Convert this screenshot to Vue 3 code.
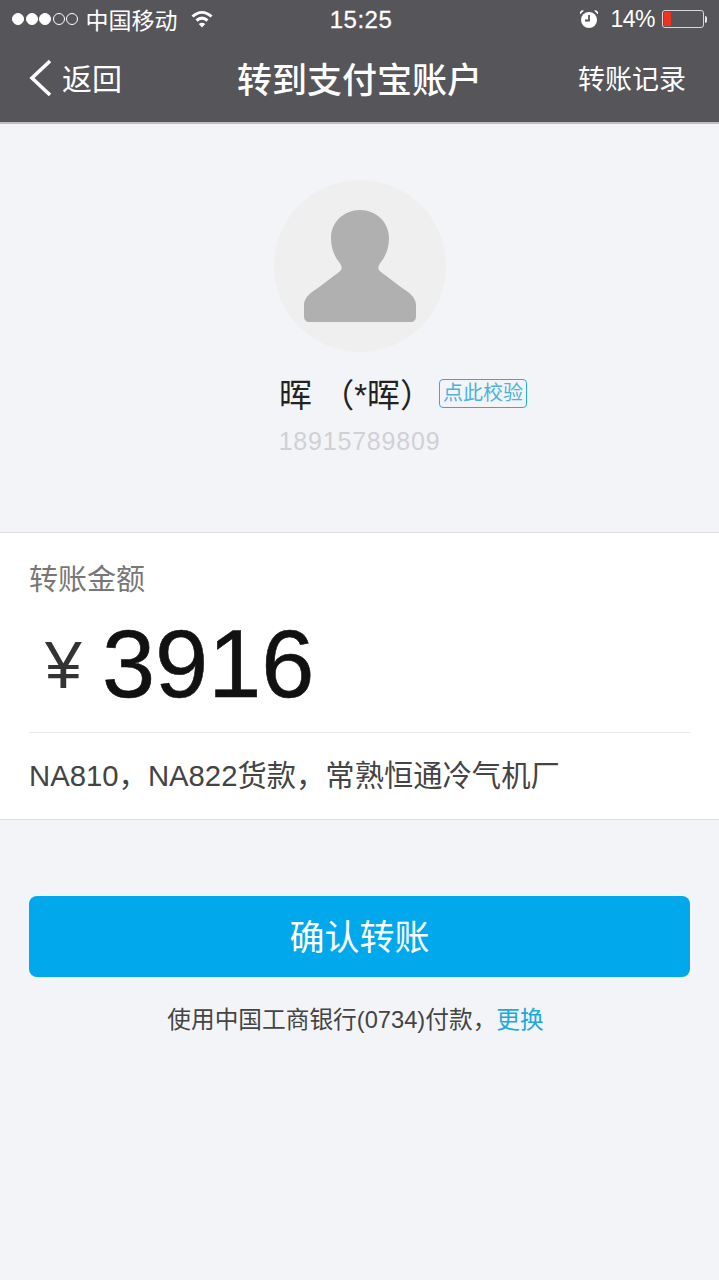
<script setup>
const signal = [1, 1, 1, 0, 0]
</script>
<template>
  <div class="page">
    <div class="top">
      <div class="status">
        <div class="status-left">
          <i v-for="(on, i) in signal" :key="i" class="dot" :class="{ on: on }"></i>
          <span class="carrier">中国移动</span>
          <svg class="wifi" width="22" height="18" viewBox="0 0 22 18">
            <path d="M1.5 6.5C7.5 1 14.5 1 20.5 6.5" fill="none" stroke="#fff" stroke-width="3"/>
            <path d="M5.5 10.5C9 7.5 13 7.5 16.5 10.5" fill="none" stroke="#fff" stroke-width="3"/>
            <path d="M7.8 14C10 12.4 12 12.4 14.2 14L11 17.5z" fill="#fff"/>
          </svg>
        </div>
        <div class="time">15:25</div>
        <div class="status-right">
          <svg class="alarm" width="20" height="20" viewBox="0 0 20 20">
            <circle cx="10" cy="11" r="8" fill="#fff"/>
            <path d="M1 5.5 5 1.5 2.8 1.3 1 3z M19 5.5 15 1.5 17.2 1.3 19 3z" fill="#fff"/>
            <path d="M10 6v5.5h-4" stroke="#55555a" stroke-width="1.8" fill="none"/>
          </svg>
          <span class="percent">14%</span>
          <div class="battery"><div class="level"></div></div>
          <div class="nub"></div>
        </div>
      </div>
      <div class="nav">
        <div class="back">
          <svg class="chevron" width="24" height="38" viewBox="0 0 24 38">
            <path d="M21 2 3 19l18 17" fill="none" stroke="#fff" stroke-width="3.6"/>
          </svg>
          <span>返回</span>
        </div>
        <div class="title">转到支付宝账户</div>
        <div class="record">转账记录</div>
      </div>
    </div>

    <div class="payee">
      <div class="avatar">
        <svg width="112" height="112" viewBox="0 0 112 112">
          <path d="M56 0C72 0 85 12 85 28C85 39 81 47 77 52C74 56 73 59 77 62C85 68 95 76 104 82C109 86 112 90 112 95V106C112 110 110 112 106 112H6C2 112 0 110 0 106V95C0 90 3 86 8 82C17 76 27 68 35 62C39 59 38 56 35 52C31 47 27 39 27 28C27 12 40 0 56 0Z" fill="#b0b0b0"/>
        </svg>
      </div>
      <div class="name-row">
        <span class="name">晖 （*晖）</span>
        <span class="verify">点此校验</span>
      </div>
      <div class="phone">18915789809</div>
    </div>

    <div class="card">
      <div class="label">转账金额</div>
      <div class="amount"><span class="yen">¥</span><span class="num">3916</span></div>
      <div class="note">NA810，NA822货款，常熟恒通冷气机厂</div>
    </div>

    <div class="action">
      <button class="confirm">确认转账</button>
      <div class="pay-with">使用中国工商银行(0734)付款，<span class="change">更换</span></div>
    </div>
  </div>
</template>
<style scoped>
.page {
  min-height: 1280px;
  background: #f3f4f8;
  font-family: "Liberation Sans", "Noto Sans CJK SC", sans-serif;
  overflow: hidden;
}
.top {
  height: 122px;
  background: #55555a;
  border-bottom: 2px solid #bdbdc2;
  color: #fff;
}
.status {
  height: 38px;
  padding: 0 12px;
  display: grid;
  grid-template-columns: 1fr auto 1fr;
  align-items: center;
}
.status-left, .status-right {
  display: flex;
  align-items: center;
}
.status-right {
  justify-content: flex-end;
}
.dot {
  width: 12px;
  height: 12px;
  border: 1px solid #fff;
  border-radius: 50%;
  box-sizing: border-box;
  margin-right: 1.5px;
}
.dot.on {
  background: #fff;
}
.carrier {
  font-size: 23px;
  margin-left: 6px;
}
.wifi {
  margin-left: 13px;
}
.time {
  font-size: 24px;
  letter-spacing: 0.5px;
  -webkit-text-stroke: 0.3px #fff;
  margin: 2px 0 0 3px;
}
.percent {
  font-size: 23px;
  letter-spacing: -0.5px;
  margin: 1px 0 0 11px;
}
.battery {
  width: 38px;
  height: 14px;
  border: 1px solid #d8d8d8;
  border-radius: 3px;
  margin-left: 7px;
  padding: 1px;
}
.level {
  width: 7px;
  height: 100%;
  background: #f0321e;
  border-radius: 1px;
}
.nub {
  width: 2px;
  height: 7px;
  background: #e8e8e8;
  border-radius: 0 2px 2px 0;
  margin-left: 1px;
}
.nav {
  height: 84px;
  box-sizing: border-box;
  padding: 0 29px 6px;
  display: grid;
  grid-template-columns: 1fr auto 1fr;
  align-items: center;
}
.back {
  display: flex;
  align-items: center;
  gap: 9px;
  font-size: 30px;
}
.chevron {
  margin-top: 2px;
}
.title {
  font-size: 35px;
  font-weight: 500;
}
.record {
  font-size: 27px;
  text-align: right;
  margin-right: 4px;
}
.payee {
  height: 408px;
  box-sizing: border-box;
  padding-top: 56px;
  display: flex;
  flex-direction: column;
  align-items: center;
}
.avatar {
  width: 172px;
  height: 172px;
  border-radius: 50%;
  background: #efeff0;
  display: flex;
  align-items: center;
  justify-content: center;
}
.name-row {
  margin-top: 19px;
  display: flex;
  align-items: center;
  height: 44px;
  margin-left: 87px;
}
.name {
  font-size: 33px;
  color: #222;
  white-space: pre;
}
.verify {
  margin-left: 6px;
  width: 88px;
  height: 29px;
  box-sizing: border-box;
  border: 1px solid #29aee0;
  border-radius: 4px;
  color: #4cb2da;
  font-size: 20px;
  line-height: 27px;
  text-align: center;
}
.phone {
  margin-top: 11px;
  font-size: 25px;
  letter-spacing: 0.8px;
  line-height: 30px;
  color: #d0d0d5;
}
.card {
  height: 288px;
  box-sizing: border-box;
  background: #fff;
  border-top: 1px solid #dfdfe3;
  border-bottom: 1px solid #dfdfe3;
  padding: 0 29px;
}
.label {
  margin-top: 30px;
  height: 34px;
  line-height: 34px;
  font-size: 29px;
  color: #777;
}
.amount {
  height: 136px;
  box-sizing: border-box;
  border-bottom: 1px solid #e8e8ea;
  padding: 0 0 0 16px;
  display: flex;
  align-items: center;
  color: #111;
}
.yen {
  font-size: 66px;
  color: #333;
  width: 57px;
}
.num {
  font-size: 95.5px;
  -webkit-text-stroke: 0.6px #111;
}
.note {
  height: 86px;
  line-height: 86px;
  font-size: 29.3px;
  color: #444;
  white-space: nowrap;
}
.action {
  padding: 76px 29px 0;
  display: flex;
  flex-direction: column;
  align-items: center;
}
.confirm {
  width: 100%;
  height: 81px;
  border: 0;
  border-radius: 8px;
  background: #01a9ec;
  color: #fff;
  font-family: inherit;
  font-size: 35px;
  padding: 0 0 5px;
}
.pay-with {
  margin: 26px 8px 0 0;
  font-size: 23.7px;
  line-height: 34px;
  color: #444;
}
.change {
  color: #1da9e0;
}
</style>
